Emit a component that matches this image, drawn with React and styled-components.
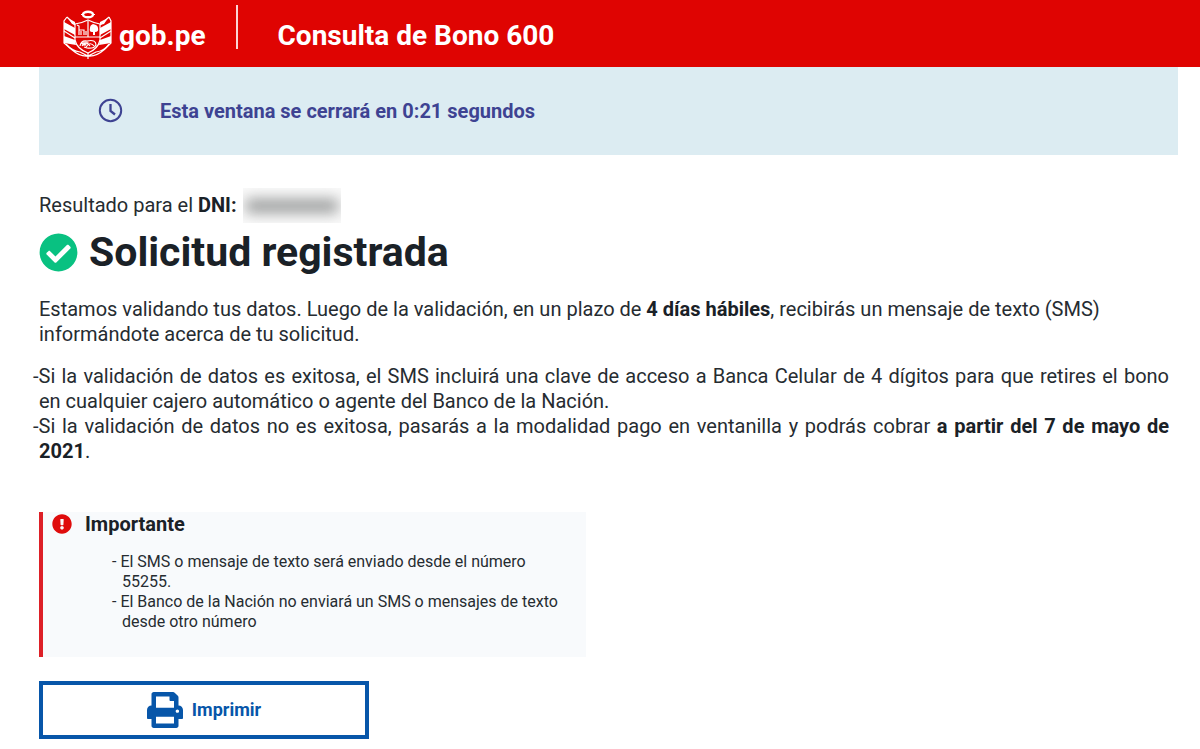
import React from 'react';
import styled, { createGlobalStyle } from 'styled-components';
import { FaPrint, FaCheckCircle, FaExclamationCircle } from 'react-icons/fa';

const GlobalStyle = createGlobalStyle`
  *, *::before, *::after { box-sizing: border-box; }
  body {
    margin: 0;
    background: #fff;
    color: #262c31;
    font-family: Roboto, "Liberation Sans", sans-serif;
    font-size: 20px;
    line-height: 25px;
  }
  h1, h2, p, ul { margin: 0; padding: 0; }
  h1, h2, b { color: #1a2127; }
`;

const Header = styled.header`
  display: flex;
  align-items: flex-start;
  height: 67px;
  padding: 4px 62px 0;
  background: #df0402;
  color: #fff;
  font-size: 28px;
  line-height: 32px;
  font-weight: 700;
`;

const Brand = styled.a`
  display: flex;
  gap: 6px;
  color: inherit;
  text-decoration: none;

  svg { margin-top: 5px; }
`;

const HeaderText = styled.span`
  padding-top: 16px;
`;

const Divider = styled.span`
  width: 2px;
  height: 44px;
  margin: 1px 40px 0 30px;
  background: #fbd5d5;
`;

const Main = styled.main`
  padding: 0 22px 8px 39px;
`;

const TimerBanner = styled.div`
  display: flex;
  align-items: center;
  gap: 36px;
  height: 88px;
  padding: 0 59px;
  background: #dcecf2;
  color: #3e4392;
  font-weight: 700;
`;

const Result = styled.p`
  display: flex;
  align-items: center;
  gap: 6px;
  height: 35px;
  margin-top: 33px;
`;

const Redacted = styled.span`
  display: flex;
  align-items: center;
  justify-content: center;
  width: 98px;
  height: 35px;
  overflow: hidden;
  background: #fafafa;

  &::before {
    content: "";
    width: 92px;
    height: 14px;
    background: #9a9c9c;
    filter: blur(7px);
  }
`;

const Title = styled.h1`
  display: flex;
  align-items: center;
  gap: 11px;
  margin: 5px 0 21px;
  font-size: 41px;
  line-height: 48px;
  font-weight: 700;

  svg { color: #09c181; }
`;

const Conditions = styled.ul`
  margin-top: 17px;
  padding-right: 9px;
  list-style: none;
  text-align: justify;
`;

const Condition = styled.li`
  text-indent: -6px;
`;

const Notice = styled.section`
  width: 48%;
  min-height: 145px;
  margin-top: 48px;
  padding: 0 12px 24px 9px;
  border-left: 4px solid #dd2027;
  background: #f8fafc;
`;

const NoticeTitle = styled.h2`
  display: flex;
  align-items: center;
  gap: 13px;
  font-size: 20px;
  line-height: 24px;
  font-weight: 700;

  svg { color: #df0c0c; }
`;

const NoticeList = styled.ul`
  margin-top: 16px;
  padding-left: 70px;
  list-style: none;
  font-size: 16px;
  line-height: 20px;
`;

const NoticeItem = styled.li`
  text-indent: -10px;
`;

const PrintButton = styled.button`
  display: flex;
  align-items: center;
  justify-content: center;
  gap: 9px;
  width: 330px;
  height: 58px;
  margin-top: 24px;
  border: 4px solid #0756a9;
  background: #fff;
  color: #0756a9;
  font: 700 18px/24px Roboto, "Liberation Sans", sans-serif;
  cursor: pointer;
`;

function CoatOfArms() {
  return (
    <svg width="51" height="50" viewBox="0 0 51 50" fill="none" stroke="#fff" strokeWidth="1.2" aria-hidden="true">
      <ellipse cx="26" cy="5.5" rx="5" ry="2.8" strokeWidth="2.4" />
      <path d="M19 5.5H21M31 5.5H33" />
      <path d="M13 15Q20 14 26 11Q32 14 38 15V31Q36 40 26 44Q15 40 13 31ZM13 28H38M26 12V28" />
      <path d="M5 8L13 16M47 8L38 16M5 8L2 12V34L9 40M47 8L49 12V34L43 40" />
      <path d="M2 13L13 19V26L2 20ZM49 13L38 19V26L49 20ZM6 9L13 13V16L10 15ZM46 9L38 13V16L42 15ZM2 27L13 31L14 36L2 34ZM49 27L38 31L37 36L49 34Z" fill="#fff" stroke="none" />
      <path d="M2 22L13 29M49 22L38 29M4 35Q10 42 18 43L26 47L34 43Q42 42 47 35M9 40Q18 48 26 47Q34 48 43 40M26 44V50" />
      <path d="M17 26V21H22V26M17 21V17L15 16M19 26V22M24 26V22" />
      <path d="M31 15Q28 16 28 19Q27 23 30 23H31V26H33V23Q37 23 36 19Q36 16 31 15Z" fill="#fff" stroke="none" />
      <path d="M18 37Q19 31 25 32Q34 30 34 36Q32 40 25 39L22 38M20 37Q24 31 28 37M24 38Q28 32 32 37M19 34L24 36" />
      <path d="M19 34Q23 31 27 33L23 37Q20 37 19 34Z" fill="#fff" stroke="none" opacity="0.7" />
    </svg>
  );
}

function ClockIcon() {
  return (
    <svg width="26" height="26" viewBox="0 0 26 26" fill="none" stroke="currentColor" strokeWidth="2" aria-hidden="true">
      <circle cx="12.5" cy="12.5" r="10.7" />
      <path d="M12.5 6V13L17 16.5" strokeWidth="2.3" />
    </svg>
  );
}

export default function App() {
  return (
    <>
      <GlobalStyle />
      <Header>
        <Brand href="#"><CoatOfArms /><HeaderText>gob.pe</HeaderText></Brand>
        <Divider />
        <HeaderText>Consulta de Bono 600</HeaderText>
      </Header>
      <Main>
        <TimerBanner role="timer">
          <ClockIcon />
          <span>Esta ventana se cerrará en 0:21 segundos</span>
        </TimerBanner>
        <Result>
          <span>Resultado para el <b>DNI:</b></span>
          <Redacted />
        </Result>
        <Title><FaCheckCircle size={39} aria-hidden="true" />Solicitud registrada</Title>
        <p>
          Estamos validando tus datos. Luego de la validación, en un plazo de <b>4 días hábiles</b>, recibirás un mensaje de texto (SMS) informándote acerca de tu solicitud.
        </p>
        <Conditions>
          <Condition>
            -Si la validación de datos es exitosa, el SMS incluirá una clave de acceso a Banca Celular de 4 dígitos para que retires el bono en&nbsp;cualquier cajero automático o agente del Banco de la Nación.
          </Condition>
          <Condition>
            -Si la validación de datos no es exitosa, pasarás a la modalidad pago en ventanilla y podrás cobrar <b>a partir del 7 de mayo de 2021</b>.
          </Condition>
        </Conditions>
        <Notice>
          <NoticeTitle><FaExclamationCircle size={20} aria-hidden="true" />Importante</NoticeTitle>
          <NoticeList>
            <NoticeItem>- El SMS o mensaje de texto será enviado desde el número 55255.</NoticeItem>
            <NoticeItem>- El Banco de la Nación no enviará un SMS o mensajes de texto desde otro número</NoticeItem>
          </NoticeList>
        </Notice>
        <PrintButton type="button"><FaPrint size={36} aria-hidden="true" />Imprimir</PrintButton>
      </Main>
    </>
  );
}
